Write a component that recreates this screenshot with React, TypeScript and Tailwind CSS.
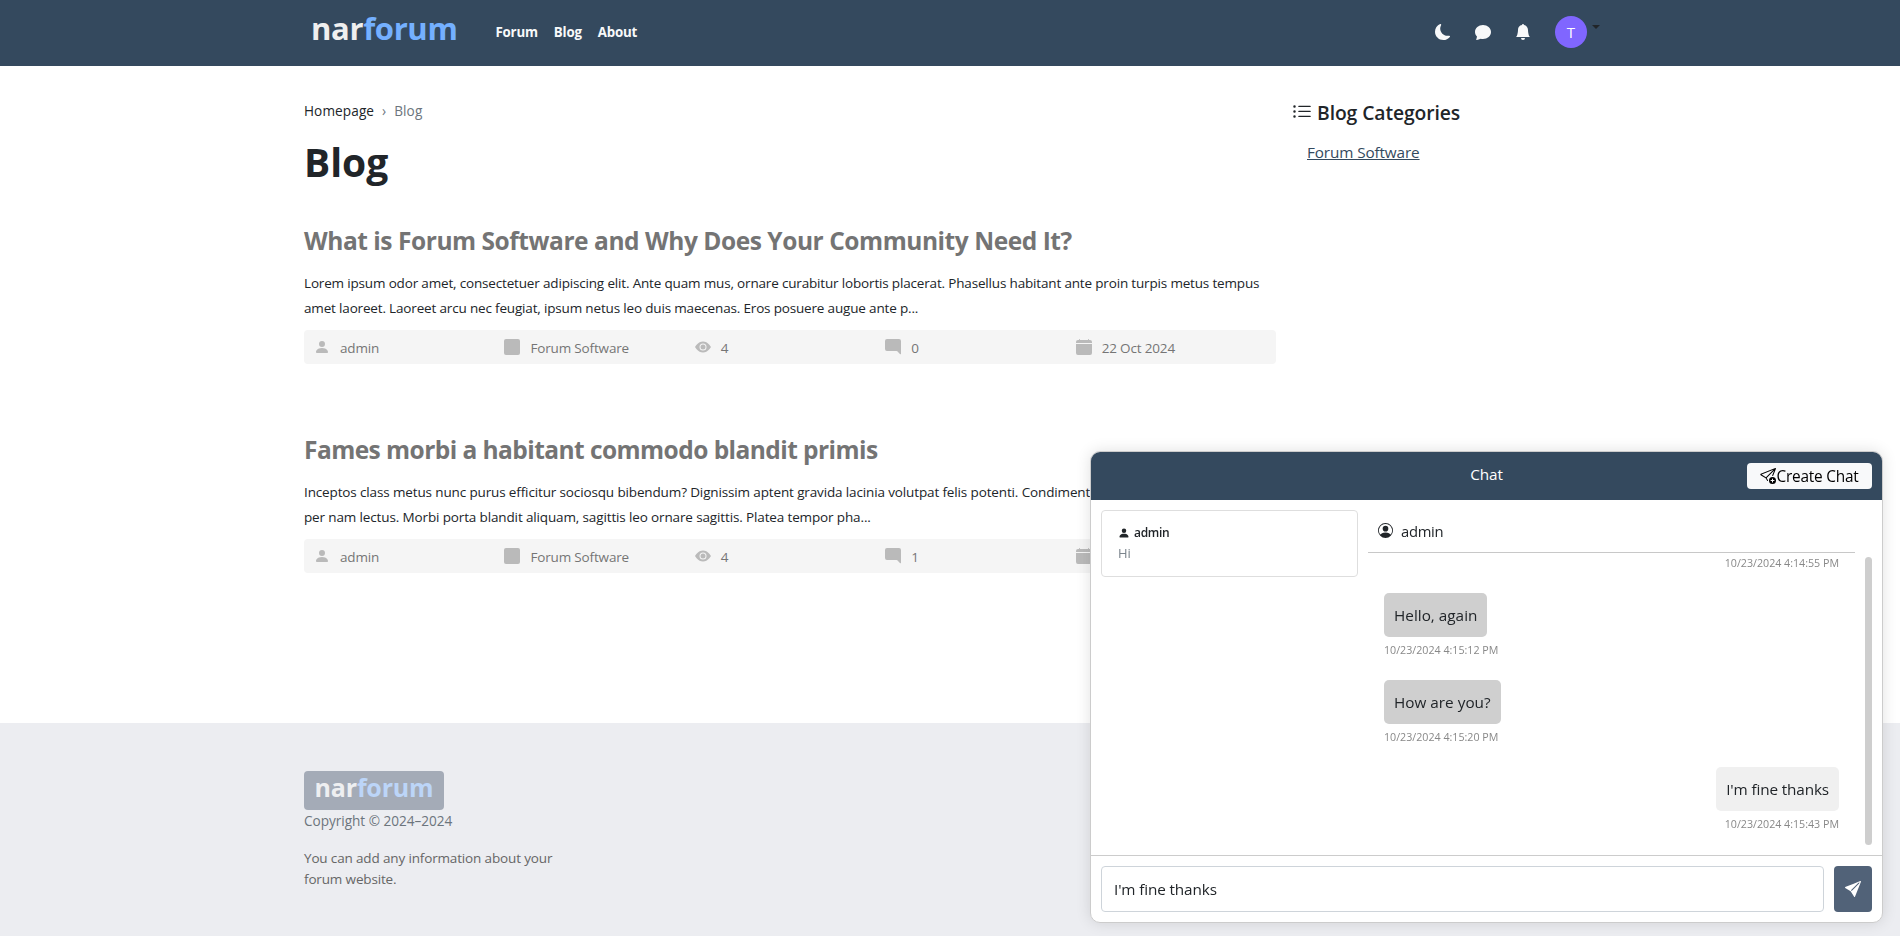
import type { ReactNode } from "react";
import {
  BsBellFill,
  BsCalendarFill,
  BsChatFill,
  BsChatRightFill,
  BsEyeFill,
  BsListUl,
  BsMoonFill,
  BsPersonCircle,
  BsPersonFill,
  BsSendFill,
  BsSendPlus,
  BsSquareFill,
} from "react-icons/bs";

type Post = {
  title: string;
  titleClass: string;
  textClass: string;
  lines: string[];
  comments: string;
  date: string;
};

const posts: Post[] = [
  {
    title: "What is Forum Software and Why Does Your Community Need It?",
    titleClass: "tracking-[-0.45px]",
    textClass: "tracking-[-0.168px]",
    lines: [
      "Lorem ipsum odor amet, consectetuer adipiscing elit. Ante quam mus, ornare curabitur lobortis placerat. Phasellus habitant ante proin turpis metus tempus",
      "amet laoreet. Laoreet arcu nec feugiat, ipsum netus leo duis maecenas. Eros posuere augue ante p...",
    ],
    comments: "0",
    date: "22 Oct 2024",
  },
  {
    title: "Fames morbi a habitant commodo blandit primis",
    titleClass: "tracking-[-0.55px]",
    textClass: "tracking-[-0.135px]",
    lines: [
      "Inceptos class metus nunc purus efficitur sociosqu bibendum? Dignissim aptent gravida lacinia volutpat felis potenti. Condiment",
      "per nam lectus. Morbi porta blandit aliquam, sagittis leo ornare sagittis. Platea tempor pha...",
    ],
    comments: "1",
    date: "22 Oct 2024",
  },
];

function Meta({ icon, children }: { icon: ReactNode; children: ReactNode }) {
  return (
    <div className="flex flex-1 items-center gap-[10px]">
      <span className="text-base text-[#bababa]">{icon}</span>
      <span className="pt-[2px]">{children}</span>
    </div>
  );
}

function PostItem({ post }: { post: Post }) {
  return (
    <article>
      <h2 className={`text-[24.5px] leading-8 font-bold text-[#747474] ${post.titleClass}`}>
        {post.title}
      </h2>
      <div className={`mt-[14px] text-[13.5px] leading-[25px] whitespace-nowrap ${post.textClass}`}>
        {post.lines.map((line) => (
          <p key={line}>{line}</p>
        ))}
      </div>
      <div className="mt-[9px] flex h-[34px] items-center rounded bg-[#f5f5f5] px-[10px] text-[13.5px] leading-5 tracking-[-0.16px] text-[#757575]">
        <Meta icon={<BsPersonFill />}>admin</Meta>
        <Meta icon={<BsSquareFill />}>Forum Software</Meta>
        <Meta icon={<BsEyeFill />}>4</Meta>
        <Meta icon={<BsChatRightFill />}>{post.comments}</Meta>
        <Meta icon={<BsCalendarFill />}>{post.date}</Meta>
      </div>
    </article>
  );
}

function Message({ text, time, own }: { text?: string; time: string; own?: boolean }) {
  return (
    <div className={own ? "flex flex-col items-end" : "flex flex-col items-start"}>
      {text && (
        <div
          className={`mb-[5px] flex h-11 items-center rounded-[5px] px-[10px] text-[15.3px] text-[#212529] ${own ? "bg-[#f0f0f0] tracking-[-0.13px]" : "bg-[#cfcfcf] tracking-[0.01px]"}`}
        >
          {text}
        </div>
      )}
      <div className="text-[10.7px] leading-4 tracking-[-0.01px] text-[#888]">{time}</div>
    </div>
  );
}

function ChatWindow() {
  return (
    <section className="fixed right-[17px] bottom-[13px] flex h-[472px] w-[793px] flex-col overflow-hidden rounded-[10px] border border-[#ccc] bg-white shadow-[0_0_15px_rgba(0,0,0,0.12)]">
      <header className="grid h-12 shrink-0 grid-cols-[1fr_auto_1fr] items-center bg-[#34495e] text-white">
        <span />
        <span className="pb-[3px] text-[15.3px] tracking-[-0.1px]">Chat</span>
        <button className="mr-[10px] flex h-[26px] w-[125px] items-center justify-center justify-self-end rounded bg-[#f8f9fa] text-[15.4px] tracking-[-0.22px] text-black">
          <BsSendPlus className="size-4" />
          <span className="pt-px">Create Chat</span>
        </button>
      </header>
      <div className="flex min-h-0 flex-1 gap-[10px] p-[10px]">
        <div className="h-[67px] w-[257px] shrink-0 rounded border border-[#dedede] px-4 pt-3">
          <div className="flex items-center gap-1 text-[12px] leading-5 font-semibold tracking-[-0.3px] text-[#212529]">
            <BsPersonFill className="size-3" />
            admin
          </div>
          <div className="text-[13px] leading-5 text-[#7b848c]">Hi</div>
        </div>
        <div className="flex min-w-0 flex-1 flex-col">
          <div className="mr-[17px] flex h-[43px] shrink-0 items-start gap-2 border-b border-[#c8c8c8] pt-3 pl-[10px] text-[14.8px] tracking-[-0.3px] text-[#212529]">
            <BsPersonCircle className="mt-px size-[15px]" />
            <span className="leading-[18px]">admin</span>
          </div>
          <div className="flex min-h-0 flex-1">
            <div className="flex flex-1 flex-col gap-[22px] overflow-hidden pt-[2px] pl-4">
              <Message own time="10/23/2024 4:14:55 PM" />
              <Message text="Hello, again" time="10/23/2024 4:15:12 PM" />
              <Message text="How are you?" time="10/23/2024 4:15:20 PM" />
              <Message own text="I'm fine thanks" time="10/23/2024 4:15:43 PM" />
            </div>
            <div className="mt-1 ml-[26px] w-[7px] rounded-full bg-[#cecece]" />
          </div>
        </div>
      </div>
      <footer className="flex h-[67px] shrink-0 gap-[10px] border-t border-[#ccc] p-[10px]">
        <div className="flex flex-1 items-center rounded border border-[#ced4da] px-3 text-[15.3px] tracking-[-0.13px] text-[#212529]">
          I'm fine thanks
        </div>
        <button className="flex w-[38px] items-center justify-center rounded bg-[#516278] text-white">
          <BsSendFill className="size-4" />
        </button>
      </footer>
    </section>
  );
}

export default function App() {
  return (
    <div className="flex h-[936px] flex-col overflow-hidden bg-white font-['Open_Sans','Noto_Sans',sans-serif] text-[#212529]">
      <header className="flex h-[66px] shrink-0 items-center bg-[#34495e] pr-[300px] pl-[311px]">
        <div className="pb-[10px] text-[31px] leading-10 font-bold tracking-[-0.35px] text-[#efefef]">
          nar<span className="text-[#74b0ff]">forum</span>
        </div>
        <nav className="ml-[38px] flex gap-4 text-[13.3px] font-bold tracking-[-0.2px] text-[#f8f9fa]">
          <a>Forum</a>
          <a>Blog</a>
          <a>About</a>
        </nav>
        <div className="ml-auto flex items-center gap-6 pb-[2px] text-base text-[#f8f9fa]">
          <BsMoonFill />
          <BsChatFill />
          <BsBellFill />
          <div className="flex gap-[5px]">
            <div className="flex size-8 items-center justify-center rounded-full bg-[#8066ff] text-[15px] text-white">
              T
            </div>
            <span className="mt-[9px] h-0 border-x-4 border-t-4 border-x-transparent border-t-[#212529]" />
          </div>
        </div>
      </header>

      <div className="flex h-[657px] shrink-0 pl-[304px]">
        <main className="w-[972px] pt-[34px]">
          <div className="flex h-[21px] items-center text-[13.6px] leading-[21px]">
            <span className="tracking-[0.1px]">Homepage</span>
            <span className="mx-2 text-[#6c757d]">›</span>
            <span className="tracking-[0.1px] text-[#6c757d]">Blog</span>
          </div>
          <h1 className="mt-[17px] mb-[39px] text-[39px] leading-[48px] font-bold">Blog</h1>
          <div className="flex flex-col gap-[70px]">
            {posts.map((post) => (
              <PostItem key={post.title} post={post} />
            ))}
          </div>
        </main>
        <aside className="ml-4 pt-[34px]">
          <h3 className="flex h-6 items-start gap-[5px] text-[19.3px] leading-[26px] font-semibold tracking-[-0.08px]">
            <BsListUl className="mt-[2px] size-5" />
            Blog Categories
          </h3>
          <a className="mt-[16px] ml-[15px] block text-[15.3px] leading-6 tracking-[-0.12px] text-[#34495e] underline">
            Forum Software
          </a>
        </aside>
      </div>

      <footer className="flex-1 bg-[#ecedf1] pt-12 pl-[304px]">
        <div className="flex h-[39px] w-[140px] items-center justify-center rounded bg-[#a4abb7] pb-[6px] text-[25px] font-bold tracking-[-0.2px] text-[#eeeff1]">
          <span>
            nar<span className="text-[#bcd5f8]">forum</span>
          </span>
        </div>
        <p className="text-[13.6px] leading-[21px] tracking-[-0.03px] text-[#6c757d]">
          Copyright © 2024–2024
        </p>
        <p className="mt-[17px] w-[262px] text-[13.5px] leading-[21px] tracking-[-0.15px] text-[#666]">
          You can add any information about your forum website.
        </p>
      </footer>

      <ChatWindow />
    </div>
  );
}
